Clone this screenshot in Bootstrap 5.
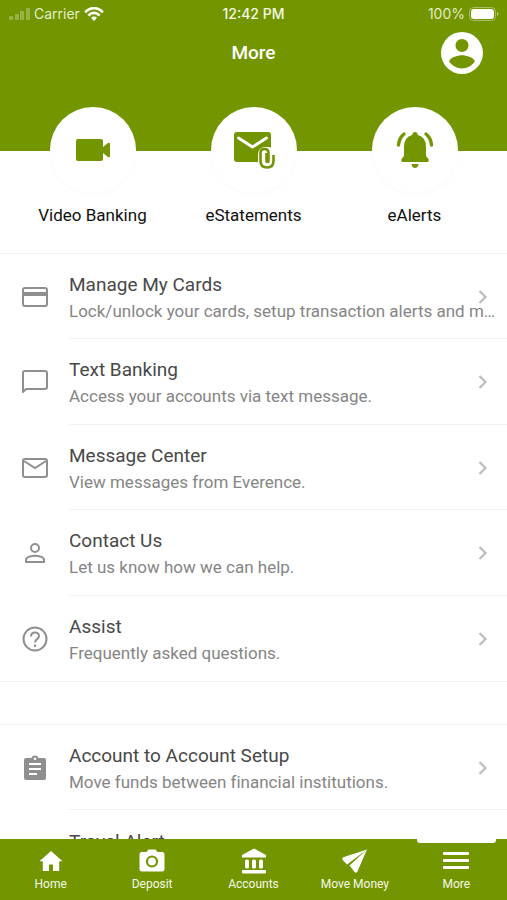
<!DOCTYPE html>
<html lang="en">
<head>
<meta charset="utf-8">
<meta name="viewport" content="width=device-width, initial-scale=1">
<title>More</title>
<link href="https://cdn.jsdelivr.net/npm/bootstrap@5.3.0/dist/css/bootstrap.min.css" rel="stylesheet">
<style>
:root { --brand: #729500; }
body { font-family: Roboto, "Liberation Sans", sans-serif; font-variant-ligatures: none; color: #101010; background: #fff; }
a { color: inherit; text-decoration: none; }
svg { display: block; flex: none; }
main { min-height: 0; }
.brand { background: var(--brand); color: #fff; }
.top { padding-bottom: 73px; }
.status { font: 500 14px/28px Inter, sans-serif; padding: 0 8px; color: #f4f8e4; }
.status .side { font-weight: 400; color: #e4ecc6; }
.title-bar { height: 50px; padding: 0 24px; }
.title-bar h1 { font-size: 19px; line-height: 24px; font-weight: 500; }
.shortcuts { margin-top: -44px; padding: 0 12px 26px; }
.shortcuts a { font-size: 17px; line-height: 24px; }
.disc { width: 86px; height: 86px; background: #fff; color: var(--brand); margin-bottom: 10px; box-shadow: 0 2px 4px #00000005; }
.menu { border-top: 1px solid #f1f1f1; border-bottom: 1px solid #f1f1f1; }
.menu + .menu { margin-top: 42px; }
.menu a { min-height: 85px; }
.menu li:nth-child(even) a { min-height: 86px; }
.lead-icon { width: 69px; flex: none; color: #8f8f8f; }
.item-text { border-bottom: 1px solid #f1f1f1; padding-top: 3px; }
li:last-child .item-text { border-bottom: 0; }
.item-title { font-size: 19px; line-height: 26px; color: #484848; }
.item-note { font-size: 17px; line-height: 26px; color: #858585; padding-right: 3px; }
.chevron { right: 19px; top: 35px; color: #bdbdbd; }
.tabs { height: 61px; }
.tabs a { font-size: 12px; line-height: 16px; padding-top: 9px; gap: 2px; color: #f6f9e9; }
.tab-icon { height: 26px; }
.tabs .active::before { content: ""; position: absolute; top: 0; left: 11px; right: 11px; height: 4px; background: #fff; border-radius: 0 0 3px 3px; }
</style>
<script src="https://cdn.jsdelivr.net/npm/bootstrap@5.3.0/dist/js/bootstrap.bundle.min.js" defer></script>
</head>
<body>
<svg class="d-none" aria-hidden="true">
  <symbol id="chev" viewBox="0 0 10 16"><path d="M1.500 2l6 6-6 6" fill="none" stroke="currentColor" stroke-width="2.200"/></symbol>
</svg>
<div class="vh-100 d-flex flex-column overflow-hidden">
  <header class="brand top flex-shrink-0">
    <div class="status d-flex align-items-center">
      <div class="side d-flex align-items-center flex-fill w-25 gap-1">
        <svg width="22" height="14" viewBox="0 0 22 14" fill="#fff" opacity=".28"><rect x="1" y="9" width="4" height="4" rx="1"/><rect x="7" y="7" width="4" height="6" rx="1"/><rect x="12" y="4" width="4" height="9" rx="1"/><rect x="18" y="1" width="4" height="12" rx="1"/></svg>
        <span>Carrier</span>
        <svg width="20" height="14" viewBox="0 0 20 14" fill="none" stroke="#fff" stroke-width="2.600"><path d="M1.200 5.300C6-.2 14-.2 18.800 5.300M4.400 8.500c3.200-3.500 8-3.500 11.200 0"/><path d="M10 14l-3-3.200c1.700-1.600 4.300-1.600 6 0z" fill="#fff" stroke="none"/></svg>
      </div>
      <div>12:42 PM</div>
      <div class="side d-flex align-items-center justify-content-end flex-fill w-25">
        <span>100%</span>
        <svg class="ms-1" width="30" height="14" viewBox="0 0 30 14" fill="#fff"><rect x=".5" y=".5" width="26" height="13" rx="4" fill="none" stroke="#a9bf63"/><rect x="2" y="2" width="23" height="10" rx="3"/><path d="M28 5v4q1.500-.5 1.500-2T28 5z" fill="#b9ca80"/></svg>
      </div>
    </div>
    <div class="title-bar d-flex align-items-center">
      <span class="flex-fill w-25"></span>
      <h1 class="m-0">More</h1>
      <span class="flex-fill w-25 d-flex justify-content-end">
        <a href="#profile" aria-label="Profile"><svg width="42" height="42" viewBox="2 2 20 20" fill="#fff"><path fill-rule="evenodd" d="M12 2a10 10 0 1 0 0 20 10 10 0 0 0 0-20zm0 3.300a3.100 3.100 0 1 1 0 6.200 3.100 3.100 0 0 1 0-6.200zm0 14.100c-2.500 0-4.800-1.300-6.100-3.300.1-1.900 4.100-3 6.100-3s6 1.100 6.100 3c-1.300 2-3.600 3.300-6.100 3.300z"/></svg></a>
      </span>
    </div>
  </header>
  <main class="flex-grow-1 position-relative">
    <nav class="shortcuts row g-0 text-center" aria-label="Shortcuts">
      <a class="col d-flex flex-column align-items-center" href="#video"><span class="disc rounded-circle d-flex align-items-center justify-content-center"><svg width="34" height="24" viewBox="0 0 34 24" fill="currentColor"><path d="M2 1h23q2 0 2 2v6l5-4q2-1 2 1v12q0 2-2 1l-5-4v6q0 2-2 2H2q-2 0-2-2V3q0-2 2-2z"/></svg></span>Video Banking</a>
      <a class="col d-flex flex-column align-items-center" href="#statements"><span class="disc rounded-circle d-flex align-items-center justify-content-center"><svg width="42" height="38" viewBox="0 0 42 38" fill="none"><rect x="1" y="1" width="37" height="30" rx="3" fill="currentColor"/><path d="M5.500 7L19.500 16 33.500 7" stroke="#fff" stroke-width="3" stroke-linecap="round"/><rect x="25" y="16" width="17" height="22" rx="7" fill="#fff"/><path d="M33.500 22v7.500q0 1.500 1 1.500t1-1.500V22q0-4-4-4t-4 4v8q0 6.500 6.500 6.500t6.500-6.500v-6" stroke="currentColor" stroke-width="2.600"/></svg></span>eStatements</a>
      <a class="col d-flex flex-column align-items-center" href="#alerts"><span class="disc rounded-circle d-flex align-items-center justify-content-center"><svg width="38" height="38" viewBox="0 0 38 38" fill="currentColor"><path d="M19 1q2.500 0 2.800 3Q30 6 30 16v9l2.500 3q1 3-1.500 3H7q-2.500 0-1.500-3L8 25v-9Q8 6 16.200 4 16.500 1 19 1zM15.500 33h7q-.5 4-3.500 4t-3.500-4z"/><path d="M8 3Q3 7 2.500 14M30 3q5 4 5.500 11" fill="none" stroke="currentColor" stroke-width="3.400" stroke-linecap="round"/></svg></span>eAlerts</a>
    </nav>
    <ul class="menu list-unstyled mb-0">
      <li><a class="d-flex position-relative" href="#cards">
        <span class="lead-icon d-flex align-items-center justify-content-center"><svg width="26" height="20" viewBox="0 0 26 20" fill="none" stroke="currentColor" stroke-width="2"><rect x="1" y="1" width="24" height="18" rx="2"/><path d="M1 7h24" stroke-width="4"/></svg></span>
        <span class="item-text flex-fill overflow-hidden d-flex flex-column justify-content-center"><span class="item-title">Manage My Cards</span><span class="item-note text-truncate">Lock/unlock your cards, setup transaction alerts and more.</span></span>
        <svg class="chevron position-absolute" width="10" height="16"><use href="#chev"/></svg></a></li>
      <li><a class="d-flex position-relative" href="#text">
        <span class="lead-icon d-flex align-items-center justify-content-center"><svg width="26" height="24" viewBox="0 0 26 24" fill="none" stroke="currentColor" stroke-width="2" stroke-linejoin="round"><path d="M3 1h20q2 0 2 2v14q0 2-2 2H4l-3 3V3q0-2 2-2z"/></svg></span>
        <span class="item-text flex-fill overflow-hidden d-flex flex-column justify-content-center"><span class="item-title">Text Banking</span><span class="item-note text-truncate">Access your accounts via text message.</span></span>
        <svg class="chevron position-absolute" width="10" height="16"><use href="#chev"/></svg></a></li>
      <li><a class="d-flex position-relative" href="#messages">
        <span class="lead-icon d-flex align-items-center justify-content-center"><svg width="26" height="20" viewBox="0 0 26 20" fill="none" stroke="currentColor" stroke-width="2"><rect x="1" y="1" width="24" height="18" rx="2"/><path d="M2 3l11 7 11-7"/></svg></span>
        <span class="item-text flex-fill overflow-hidden d-flex flex-column justify-content-center"><span class="item-title">Message Center</span><span class="item-note text-truncate">View messages from Everence.</span></span>
        <svg class="chevron position-absolute" width="10" height="16"><use href="#chev"/></svg></a></li>
      <li><a class="d-flex position-relative" href="#contact">
        <span class="lead-icon d-flex align-items-center justify-content-center"><svg width="20" height="20" viewBox="0 0 20 20" fill="none" stroke="currentColor" stroke-width="2"><circle cx="10" cy="5" r="4"/><path d="M1 19v-2.500C1 14 7 12.700 10 12.700s9 1.300 9 3.800V19z" stroke-linejoin="round"/></svg></span>
        <span class="item-text flex-fill overflow-hidden d-flex flex-column justify-content-center"><span class="item-title">Contact Us</span><span class="item-note text-truncate">Let us know how we can help.</span></span>
        <svg class="chevron position-absolute" width="10" height="16"><use href="#chev"/></svg></a></li>
      <li><a class="d-flex position-relative" href="#assist">
        <span class="lead-icon d-flex align-items-center justify-content-center"><svg width="26" height="26" viewBox="0 0 26 26" fill="none" stroke="currentColor" stroke-width="2"><circle cx="13" cy="13" r="11.500"/><path d="M9 10.500c0-5.500 8-5.300 8-.5 0 3-4 3.300-4 6.500M13 18.500v2.500"/></svg></span>
        <span class="item-text flex-fill overflow-hidden d-flex flex-column justify-content-center"><span class="item-title">Assist</span><span class="item-note text-truncate">Frequently asked questions.</span></span>
        <svg class="chevron position-absolute" width="10" height="16"><use href="#chev"/></svg></a></li>
    </ul>
    <ul class="menu list-unstyled mb-0">
      <li><a class="d-flex position-relative" href="#setup">
        <span class="lead-icon d-flex align-items-center justify-content-center"><svg width="24" height="26" viewBox="0 0 24 26" fill="currentColor"><path fill-rule="evenodd" d="M3 3h5.300a4 4 0 0 1 7.400 0H21q2 0 2 2v18q0 2-2 2H3q-2 0-2-2V5q0-2 2-2zm9-.5a1.300 1.300 0 1 0 0 2.600 1.300 1.300 0 0 0 0-2.600zM6 8v2h12V8zm0 5v2h12v-2zm0 5v2h8v-2z"/></svg></span>
        <span class="item-text flex-fill overflow-hidden d-flex flex-column justify-content-center"><span class="item-title">Account to Account Setup</span><span class="item-note text-truncate">Move funds between financial institutions.</span></span>
        <svg class="chevron position-absolute" width="10" height="16"><use href="#chev"/></svg></a></li>
      <li><a class="d-flex position-relative" href="#travel">
        <span class="lead-icon"></span>
        <span class="item-text flex-fill overflow-hidden d-flex flex-column justify-content-center"><span class="item-title">Travel Alert</span><span class="item-note">&nbsp;</span></span></a></li>
    </ul>
  </main>
  <nav class="tabs brand d-flex flex-shrink-0 position-relative" aria-label="Main">
    <a class="d-flex flex-column align-items-center flex-fill w-25" href="#home"><span class="tab-icon d-flex align-items-center"><svg width="24" height="22" viewBox="0 0 24 22" fill="#fff"><path d="M12 1L.5 11.300h3.300V21H10v-6.500h4V21h6.200v-9.700h3.300z"/></svg></span>Home</a>
    <a class="d-flex flex-column align-items-center flex-fill w-25" href="#deposit"><span class="tab-icon d-flex align-items-center"><svg width="26" height="24" viewBox="0 0 26 24"><path d="M3 3h4.500L9.500.5h7l2 2.500H23q2.500 0 2.500 2.500V20q0 2.500-2.500 2.500H3Q.5 22.500.5 20V5.500Q.5 3 3 3z" fill="#fff"/><circle cx="13" cy="12.500" r="5" fill="none" stroke="#729500" stroke-width="2.200"/></svg></span>Deposit</a>
    <a class="d-flex flex-column align-items-center flex-fill w-25" href="#accounts"><span class="tab-icon d-flex align-items-center"><svg width="24" height="26" viewBox="0 0 24 25" fill="#fff"><path d="M12 0l12 6.500V9H0V6.500z"/><rect x="3" y="11" width="4" height="9" rx="1.500"/><rect x="10" y="11" width="4" height="9" rx="1.500"/><rect x="17" y="11" width="4" height="9" rx="1.500"/><rect y="21.500" width="24" height="3.500" rx="1"/></svg></span>Accounts</a>
    <a class="d-flex flex-column align-items-center flex-fill w-25 text-nowrap" href="#move"><span class="tab-icon d-flex align-items-center"><svg width="26" height="24" viewBox="0 0 26 24" fill="#fff"><path d="M25 .5L.5 8.500v2.200L5 15.500zM25 .5L7.500 16.500l5.500 7h2z"/></svg></span>Move Money</a>
    <a class="active d-flex flex-column align-items-center flex-fill w-25 position-relative" href="#more" aria-current="page"><span class="tab-icon d-flex align-items-center"><svg width="26" height="20" viewBox="0 0 26 20" fill="#fff"><rect y="1" width="26" height="3" rx="1"/><rect y="8" width="26" height="3" rx="1"/><rect y="15" width="26" height="3" rx="1"/></svg></span>More</a>
  </nav>
</div>
</body>
</html>
